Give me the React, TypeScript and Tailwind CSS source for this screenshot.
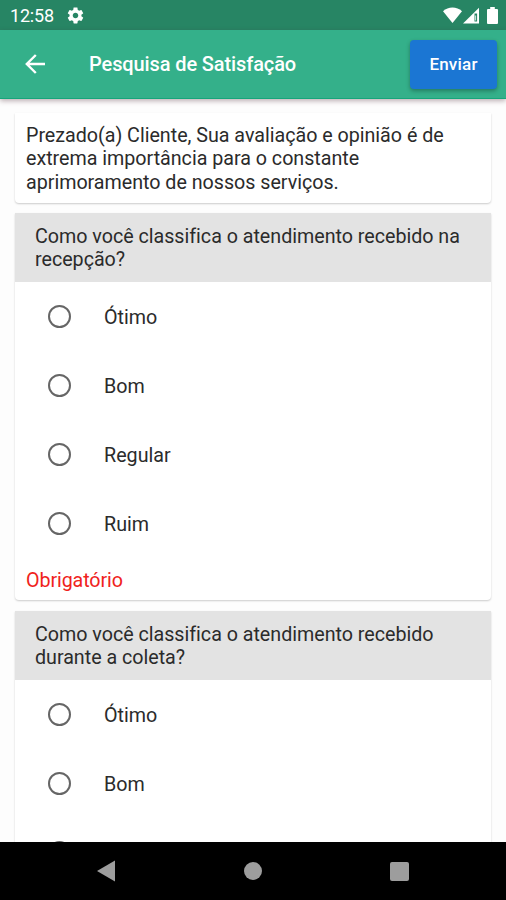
import { useState } from 'react';

const options = ['Ótimo', 'Bom', 'Regular', 'Ruim'];

const questions = [
  { id: 'recepcao', lines: ['Como você classifica o atendimento recebido na', 'recepção?'] },
  { id: 'coleta', lines: ['Como você classifica o atendimento recebido', 'durante a coleta?'] },
];

const StatusBar = () => (
  <div className="flex h-[30px] shrink-0 items-center bg-[#278564] pl-[10px] pr-[8px] text-white">
    <span className="text-[18px] leading-none tracking-[-0.2px] pt-[2px]">12:58</span>
    <svg className="ml-[12px]" width="19" height="19" viewBox="0 0 24 24" fill="currentColor">
      <path d="M19.43 12.98c.04-.32.07-.64.07-.98s-.03-.66-.07-.98l2.11-1.65c.19-.15.24-.42.12-.64l-2-3.46c-.12-.22-.39-.3-.61-.22l-2.49 1c-.52-.4-1.08-.73-1.69-.98l-.38-2.65C14.46 2.18 14.25 2 14 2h-4c-.25 0-.46.18-.49.42l-.38 2.65c-.61.25-1.17.59-1.69.98l-2.49-1c-.23-.09-.49 0-.61.22l-2 3.46c-.13.22-.07.49.12.64l2.11 1.65c-.04.32-.07.65-.07.98s.03.66.07.98l-2.11 1.65c-.19.15-.24.42-.12.64l2 3.46c.12.22.39.3.61.22l2.49-1c.52.4 1.08.73 1.69.98l.38 2.65c.03.24.24.42.49.42h4c.25 0 .46-.18.49-.42l.38-2.65c.61-.25 1.17-.59 1.69-.98l2.49 1c.23.09.49 0 .61-.22l2-3.46c.12-.22.07-.49-.12-.64l-2.11-1.65zM12 15.5c-1.93 0-3.5-1.57-3.5-3.5s1.57-3.5 3.5-3.5 3.5 1.57 3.5 3.5-1.57 3.5-3.5 3.5z" />
    </svg>
    <div className="ml-auto flex items-center">
      <svg width="19" height="16" viewBox="0 0 19 16" fill="currentColor">
        <path d="M9.5 16 0 4.2C2.7 1.8 6 .6 9.5.6s6.8 1.2 9.5 3.6z" />
      </svg>
      <svg className="ml-[1px]" width="17" height="17" viewBox="0 0 17 17" fill="none" stroke="currentColor">
        <path d="M0 16.5 16 .8v15.7z" fill="currentColor" stroke="none" />
        <path d="M12.8 6.5v8" stroke="#278564" strokeWidth="2.6" />
        <path d="M12.6 8.5v5" strokeWidth="0.8" />
      </svg>
      <svg className="ml-[7px]" width="11" height="17" viewBox="0 0 11 17" fill="currentColor">
        <path d="M3.2 0h4.6v2H10q1 0 1 1v13q0 1-1 1H1q-1 0-1-1V3q0-1 1-1h2.2z" />
      </svg>
    </div>
  </div>
);

const AppBar = () => (
  <header className="z-10 flex h-[69px] shrink-0 items-center border-b border-[#16a57b] bg-[#34b08a] pl-[25px] pr-[9px] text-white shadow-[0_2px_5px_rgba(70,30,40,0.35)]">
    <button type="button" aria-label="Voltar">
      <svg width="20" height="20" viewBox="0 0 20 20" fill="none" stroke="currentColor" strokeWidth="2.4">
        <path d="M20 10H2M10.8 1 1.8 10l9 9" />
      </svg>
    </button>
    <h1 className="ml-[44px] pt-[2px] text-[20px] font-medium tracking-[-0.11px]">Pesquisa de Satisfação</h1>
    <button
      type="button"
      className="ml-auto h-[49px] w-[87px] rounded-[4px] bg-[#1b76d3] pt-[2px] text-[17px] font-medium tracking-[0.2px] shadow-[0_2px_4px_rgba(0,0,0,0.3)]"
    >
      Enviar
    </button>
  </header>
);

const cardClass = 'shrink-0 overflow-hidden rounded-b-[4px] bg-white shadow-[0_1px_2px_rgba(0,0,0,0.2)]';

type QuestionProps = { id: string; lines: string[] };

const QuestionCard = ({ id, lines }: QuestionProps) => {
  const [selected, setSelected] = useState('');

  return (
    <section className={cardClass}>
      <h2 className="h-[69px] bg-[#e3e3e3] pl-[20px] pt-[12px]">
        {lines.map((line) => (
          <span key={line} className="block whitespace-nowrap">{line}</span>
        ))}
      </h2>
      {options.map((option) => (
        <label key={option} className="flex h-[69px] items-center pl-[33px]">
          <input
            type="radio"
            name={id}
            checked={selected === option}
            onChange={() => setSelected(option)}
            className="size-[23px] appearance-none rounded-full border-2 border-[#666] checked:border-[7px] checked:border-[#34b08a]"
          />
          <span className="ml-[33px] pt-[2px] tracking-[0.02px]">{option}</span>
        </label>
      ))}
      <p className="h-[42px] pl-[11px] pt-[11px] text-[#f0231c] tracking-[-0.1px]">Obrigatório</p>
    </section>
  );
};

const NavigationBar = () => (
  <nav className="z-10 grid h-[58px] shrink-0 grid-cols-[1fr_auto_1fr] items-center bg-black px-[97px]">
    <svg width="18" height="22" viewBox="0 0 18 22" fill="#9d9d9d">
      <path d="M0 11 18 .5v21z" />
    </svg>
    <span className="size-[18px] rounded-full bg-[#9d9d9d]" />
    <span className="size-[19px] justify-self-end rounded-[2px] bg-[#9d9d9d]" />
  </nav>
);

export default function App() {
  return (
    <div className="flex h-[900px] w-[506px] flex-col overflow-hidden bg-[#fdfdfd] font-['Roboto',sans-serif] text-[19.7px] leading-[23.3px] tracking-[-0.02px] text-[#2b2b2b]">
      <StatusBar />
      <AppBar />
      <main className="flex min-h-0 flex-1 flex-col overflow-hidden px-[15px] pt-[14px]">
        <section className={`${cardClass} mb-[10px] h-[90px] pl-[11px] pt-[11px]`}>
          <p className="whitespace-nowrap">
            Prezado(a) Cliente, Sua avaliação e opinião é de
            <br />
            extrema importância para o constante
            <br />
            aprimoramento de nossos serviços.
          </p>
        </section>
        <div className="flex flex-col gap-[11px]">
          {questions.map((question) => (
            <QuestionCard key={question.id} {...question} />
          ))}
        </div>
      </main>
      <NavigationBar />
    </div>
  );
}
